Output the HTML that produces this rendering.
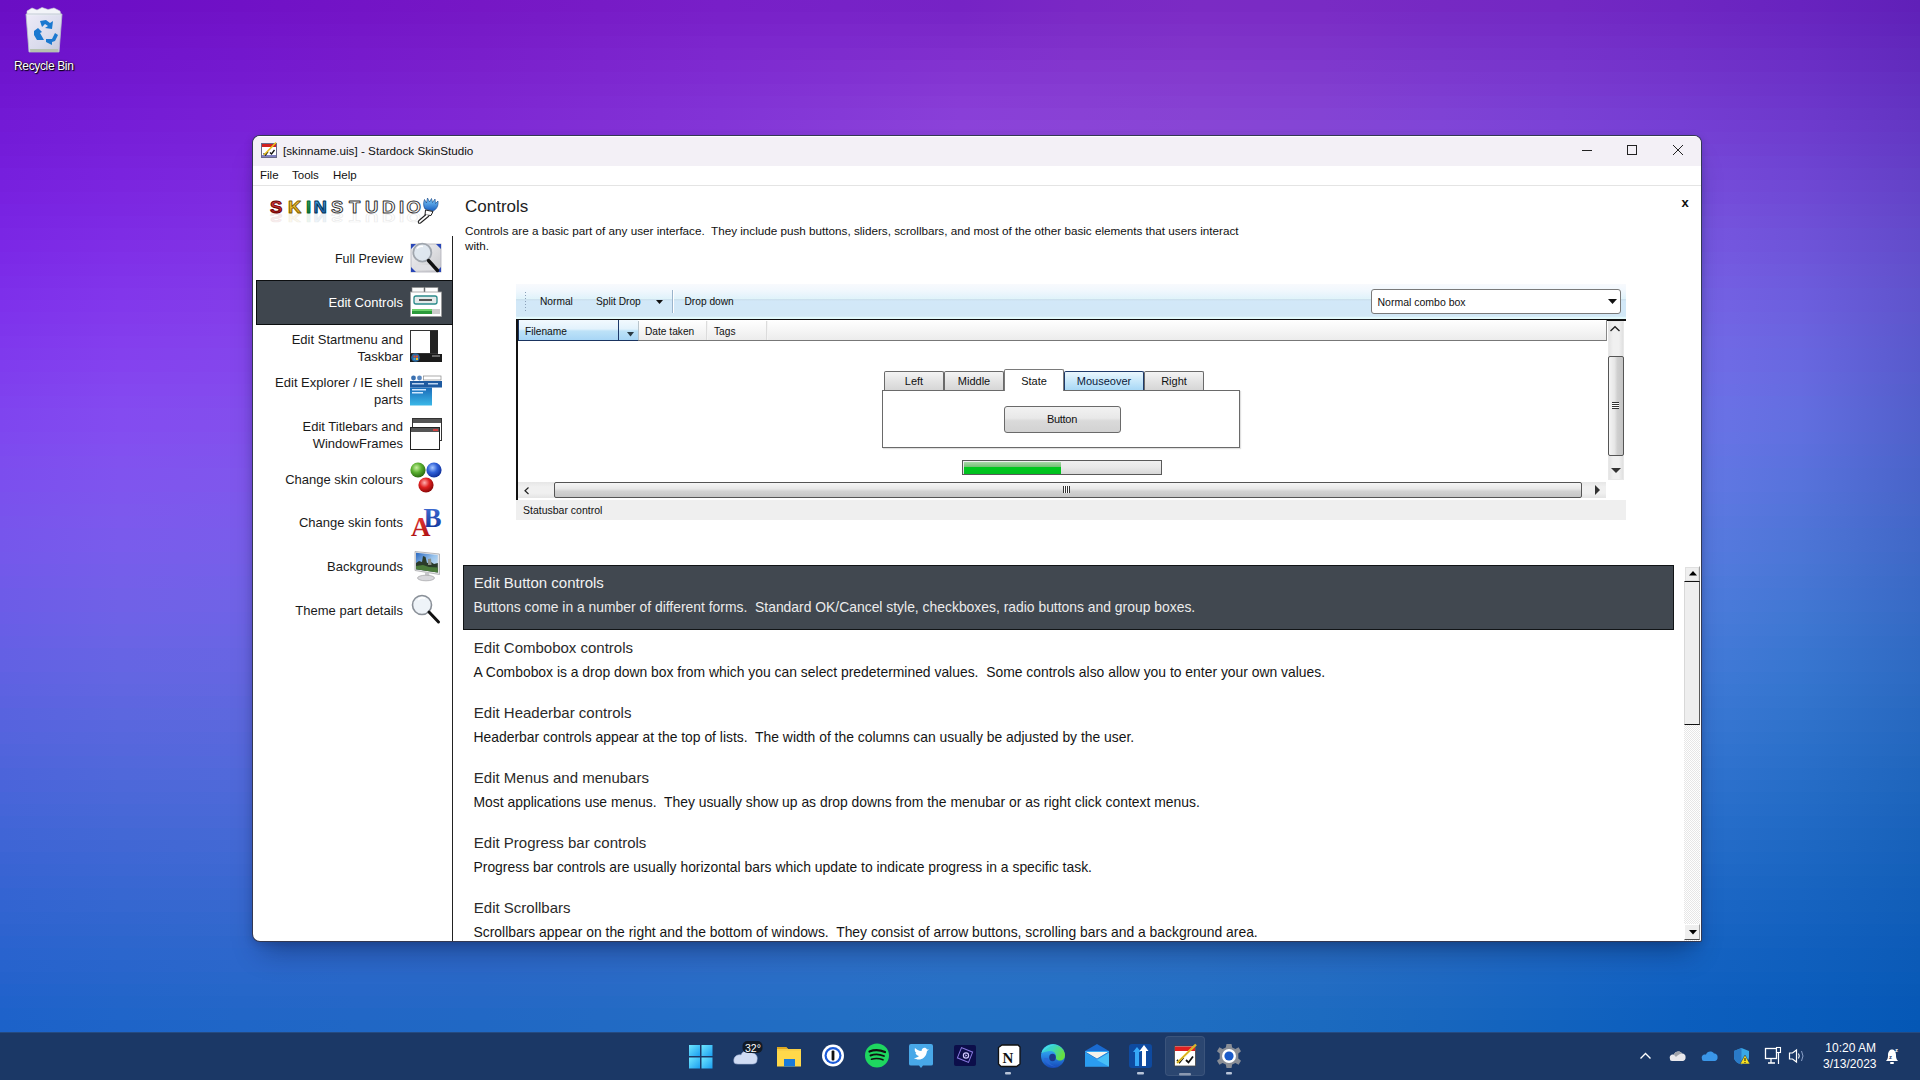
<!DOCTYPE html>
<html><head><meta charset="utf-8">
<style>
*{box-sizing:border-box;margin:0;padding:0}
html,body{width:1920px;height:1080px;overflow:hidden;position:relative;font-family:"Liberation Sans",sans-serif;color:#1a1a1a}
#bg i{position:absolute;left:0;width:1920px;height:12px;display:block}
.a{position:absolute;white-space:nowrap;line-height:1}
.r{text-align:right}
svg{position:absolute;overflow:visible}
</style></head><body>
<div id="bg" style="position:absolute;left:0;top:0;width:1920px;height:1032px;overflow:hidden">
<i style="top:0px;background:linear-gradient(90deg,#6a0ec4 0.00%,#6d0fc6 6.25%,#7011c6 12.50%,#7314c6 18.75%,#7617c5 25.00%,#771bc6 31.25%,#781fc8 37.50%,#7722c7 43.75%,#7623c5 50.00%,#7a28c5 56.25%,#7b2bc4 62.50%,#792bc4 68.75%,#7629c3 75.00%,#7328c3 81.25%,#6e26c2 87.50%,#6823bf 93.75%,#6020b8 100.00%)"></i>
<i style="top:12px;background:linear-gradient(90deg,#6b0fc6 0.00%,#6e11c7 6.25%,#7113c8 12.50%,#7415c7 18.75%,#7619c6 25.00%,#781dc8 31.25%,#7921c9 37.50%,#7924c9 43.75%,#7826c7 50.00%,#7c2bc6 56.25%,#7d2dc6 62.50%,#7b2dc6 68.75%,#762cc5 75.00%,#732bc5 81.25%,#6f28c4 87.50%,#6926c0 93.75%,#6022b9 100.00%)"></i>
<i style="top:24px;background:linear-gradient(90deg,#6c10c8 0.00%,#6f12c9 6.25%,#7214ca 12.50%,#7517c9 18.75%,#771bc8 25.00%,#791fc9 31.25%,#7a23cb 37.50%,#7b27cb 43.75%,#7b29c9 50.00%,#7d2ec8 56.25%,#7e30c8 62.50%,#7c30c7 68.75%,#772ec7 75.00%,#742dc7 81.25%,#702bc5 87.50%,#6928c2 93.75%,#6024ba 100.00%)"></i>
<i style="top:36px;background:linear-gradient(90deg,#6d12c9 0.00%,#7013cb 6.25%,#7316cb 12.50%,#7619ca 18.75%,#781cc9 25.00%,#7a21cb 31.25%,#7c26cd 37.50%,#7c29cd 43.75%,#7d2ccb 50.00%,#7f30ca 56.25%,#8033c9 62.50%,#7d33c9 68.75%,#7831c9 75.00%,#7530c9 81.25%,#712dc7 87.50%,#6a2ac3 93.75%,#6127bb 100.00%)"></i>
<i style="top:48px;background:linear-gradient(90deg,#6d13cb 0.00%,#7115cd 6.25%,#7317cd 12.50%,#771acc 18.75%,#791ecb 25.00%,#7b23cd 31.25%,#7d28ce 37.50%,#7e2cce 43.75%,#802fce 50.00%,#8133cc 56.25%,#8135cb 62.50%,#7e35cb 68.75%,#7934cb 75.00%,#7632cb 81.25%,#7130c9 87.50%,#6b2dc5 93.75%,#6129bc 100.00%)"></i>
<i style="top:60px;background:linear-gradient(90deg,#6e14cd 0.00%,#7116ce 6.25%,#7419cf 12.50%,#771ccd 18.75%,#7a20cc 25.00%,#7c25ce 31.25%,#7e2ad0 37.50%,#802fd0 43.75%,#8233d0 50.00%,#8336ce 56.25%,#8338cd 62.50%,#7f38cd 68.75%,#7a37cc 75.00%,#7735cc 81.25%,#7232ca 87.50%,#6b2fc6 93.75%,#612bbd 100.00%)"></i>
<i style="top:72px;background:linear-gradient(90deg,#6f15cf 0.00%,#7218d0 6.25%,#751ad0 12.50%,#781ecf 18.75%,#7b22ce 25.00%,#7d27d0 31.25%,#7f2cd2 37.50%,#8131d2 43.75%,#8436d2 50.00%,#8439d0 56.25%,#843bce 62.50%,#803bce 68.75%,#7c39cf 75.00%,#7838ce 81.25%,#7335cc 87.50%,#6c32c8 93.75%,#622ebf 100.00%)"></i>
<i style="top:84px;background:linear-gradient(90deg,#7016d1 0.00%,#7319d2 6.25%,#761cd2 12.50%,#7920d1 18.75%,#7c24d0 25.00%,#7e29d1 31.25%,#802fd3 37.50%,#8334d4 43.75%,#8639d4 50.00%,#863cd2 56.25%,#853dd0 62.50%,#823ed0 68.75%,#7d3cd1 75.00%,#793ad0 81.25%,#7437ce 87.50%,#6c34c9 93.75%,#6230c0 100.00%)"></i>
<i style="top:96px;background:linear-gradient(90deg,#7117d2 0.00%,#741ad4 6.25%,#771ed4 12.50%,#7a21d2 18.75%,#7d25d1 25.00%,#7f2bd3 31.25%,#8131d5 37.50%,#8437d5 43.75%,#883cd6 50.00%,#873ed3 56.25%,#8640d2 62.50%,#8340d2 68.75%,#7e3fd3 75.00%,#793dd2 81.25%,#743ad0 87.50%,#6d36cb 93.75%,#6232c1 100.00%)"></i>
<i style="top:108px;background:linear-gradient(90deg,#7219d4 0.00%,#751cd5 6.25%,#781fd5 12.50%,#7b23d4 18.75%,#7e27d3 25.00%,#802dd4 31.25%,#8233d6 37.50%,#8539d7 43.75%,#893fd8 50.00%,#8941d5 56.25%,#8743d3 62.50%,#8443d4 68.75%,#7f42d5 75.00%,#7a40d4 81.25%,#753cd2 87.50%,#6d39cc 93.75%,#6334c2 100.00%)"></i>
<i style="top:120px;background:linear-gradient(90deg,#731ad6 0.00%,#761dd7 6.25%,#7921d7 12.50%,#7c25d5 18.75%,#7e29d5 25.00%,#812fd5 31.25%,#8335d7 37.50%,#873cd8 43.75%,#8b42d9 50.00%,#8a44d7 56.25%,#8845d5 62.50%,#8445d5 68.75%,#8045d7 75.00%,#7b42d6 81.25%,#753fd4 87.50%,#6e3bce 93.75%,#6337c3 100.00%)"></i>
<i style="top:132px;background:linear-gradient(90deg,#731bd8 0.00%,#771fd9 6.25%,#7923d8 12.50%,#7c27d7 18.75%,#7f2bd6 25.00%,#8131d7 31.25%,#8437d9 37.50%,#883eda 43.75%,#8c44db 50.00%,#8b46d8 56.25%,#8948d6 62.50%,#8548d7 68.75%,#8148d8 75.00%,#7c45d7 81.25%,#7641d5 87.50%,#6e3ecf 93.75%,#6339c4 100.00%)"></i>
<i style="top:144px;background:linear-gradient(90deg,#741cd9 0.00%,#7820da 6.25%,#7a24da 12.50%,#7d28d8 18.75%,#802dd8 25.00%,#8233d8 31.25%,#8539da 37.50%,#8940db 43.75%,#8d47dc 50.00%,#8c49da 56.25%,#8a4ad8 62.50%,#864bd8 68.75%,#824ada 75.00%,#7c48d9 81.25%,#7644d7 87.50%,#6e40d0 93.75%,#633bc5 100.00%)"></i>
<i style="top:156px;background:linear-gradient(90deg,#751ddb 0.00%,#7922dc 6.25%,#7b26db 12.50%,#7e2ada 18.75%,#802fd9 25.00%,#8335d9 31.25%,#863bdb 37.50%,#8a43dd 43.75%,#8e49dd 50.00%,#8d4bdb 56.25%,#8b4dd9 62.50%,#874dda 68.75%,#824ddb 75.00%,#7d4adb 81.25%,#7747d9 87.50%,#6e43d2 93.75%,#633dc5 100.00%)"></i>
<i style="top:168px;background:linear-gradient(90deg,#761fdd 0.00%,#7a23de 6.25%,#7c28dd 12.50%,#7e2cdb 18.75%,#8131da 25.00%,#8337db 31.25%,#863edc 37.50%,#8a45de 43.75%,#8e4bde 50.00%,#8e4edc 56.25%,#8b4fdb 62.50%,#874fdb 68.75%,#834fdd 75.00%,#7d4ddc 81.25%,#7749da 87.50%,#6f45d3 93.75%,#6340c6 100.00%)"></i>
<i style="top:180px;background:linear-gradient(90deg,#7720de 0.00%,#7b25df 6.25%,#7d2ade 12.50%,#7f2edc 18.75%,#8232db 25.00%,#8439dc 31.25%,#8740dd 37.50%,#8b47df 43.75%,#8f4de0 50.00%,#8e50de 56.25%,#8c51dc 62.50%,#8852dd 68.75%,#8352de 75.00%,#7d4fde 81.25%,#774cdb 87.50%,#6f48d4 93.75%,#6342c7 100.00%)"></i>
<i style="top:192px;background:linear-gradient(90deg,#7821e0 0.00%,#7c27e1 6.25%,#7e2ce0 12.50%,#8030de 18.75%,#8234dd 25.00%,#843add 31.25%,#8841de 37.50%,#8c49e0 43.75%,#8f4fe1 50.00%,#8f52df 56.25%,#8c53dd 62.50%,#8854de 68.75%,#8354e0 75.00%,#7e52df 81.25%,#774edd 87.50%,#6f4ad5 93.75%,#6344c8 100.00%)"></i>
<i style="top:204px;background:linear-gradient(90deg,#7823e2 0.00%,#7c28e2 6.25%,#7f2de1 12.50%,#8032df 18.75%,#8336de 25.00%,#853cde 31.25%,#8843df 37.50%,#8c4be1 43.75%,#9051e1 50.00%,#8f54e0 56.25%,#8c55de 62.50%,#8856df 68.75%,#8456e1 75.00%,#7e54e0 81.25%,#7851de 87.50%,#6f4dd6 93.75%,#6346c8 100.00%)"></i>
<i style="top:216px;background:linear-gradient(90deg,#7924e3 0.00%,#7d2ae4 6.25%,#7f2fe2 12.50%,#8134e0 18.75%,#8338df 25.00%,#853edf 31.25%,#8845e0 37.50%,#8c4de2 43.75%,#9053e2 50.00%,#8f56e1 56.25%,#8d57e0 62.50%,#8858e0 68.75%,#8458e2 75.00%,#7e57e2 81.25%,#7854df 87.50%,#6f4fd7 93.75%,#6348c9 100.00%)"></i>
<i style="top:228px;background:linear-gradient(90deg,#7a26e4 0.00%,#7e2ce5 6.25%,#8031e3 12.50%,#8135e1 18.75%,#833ae0 25.00%,#8640e0 31.25%,#8947e1 37.50%,#8d4fe3 43.75%,#9055e3 50.00%,#8f58e2 56.25%,#8d59e1 62.50%,#895ae1 68.75%,#845ae3 75.00%,#7e59e3 81.25%,#7856e1 87.50%,#6f52d8 93.75%,#624aca 100.00%)"></i>
<i style="top:240px;background:linear-gradient(90deg,#7b27e6 0.00%,#7f2ee6 6.25%,#8133e4 12.50%,#8237e2 18.75%,#843ce1 25.00%,#8642e1 31.25%,#8949e2 37.50%,#8d50e3 43.75%,#9057e4 50.00%,#8f5ae3 56.25%,#8d5be2 62.50%,#895ce3 68.75%,#845de4 75.00%,#7e5be4 81.25%,#7758e2 87.50%,#6e54d9 93.75%,#624cca 100.00%)"></i>
<i style="top:252px;background:linear-gradient(90deg,#7b29e7 0.00%,#8030e8 6.25%,#8135e6 12.50%,#8239e3 18.75%,#843ee2 25.00%,#8644e2 31.25%,#894be3 37.50%,#8d52e4 43.75%,#9058e5 50.00%,#8f5ce3 56.25%,#8d5de3 62.50%,#885ee3 68.75%,#835fe5 75.00%,#7e5de5 81.25%,#775be3 87.50%,#6e56da 93.75%,#614ecb 100.00%)"></i>
<i style="top:264px;background:linear-gradient(90deg,#7c2be8 0.00%,#8032e9 6.25%,#8237e7 12.50%,#833be4 18.75%,#8440e3 25.00%,#8645e2 31.25%,#894ce3 37.50%,#8d54e5 43.75%,#905ae5 50.00%,#8f5de4 56.25%,#8c5fe4 62.50%,#8860e4 68.75%,#8361e6 75.00%,#7e5fe6 81.25%,#775de4 87.50%,#6e59db 93.75%,#6150cb 100.00%)"></i>
<i style="top:276px;background:linear-gradient(90deg,#7c2de9 0.00%,#8134ea 6.25%,#8239e8 12.50%,#833de5 18.75%,#8441e3 25.00%,#8647e3 31.25%,#894ee4 37.50%,#8d55e5 43.75%,#8f5ce6 50.00%,#8f5fe5 56.25%,#8c61e4 62.50%,#8862e5 68.75%,#8362e7 75.00%,#7d62e7 81.25%,#775fe5 87.50%,#6d5bdc 93.75%,#6051cb 100.00%)"></i>
<i style="top:288px;background:linear-gradient(90deg,#7d2fea 0.00%,#8236eb 6.25%,#833be8 12.50%,#833fe6 18.75%,#8443e4 25.00%,#8649e4 31.25%,#8950e5 37.50%,#8c57e6 43.75%,#8f5de6 50.00%,#8f61e6 56.25%,#8c62e5 62.50%,#8864e6 68.75%,#8364e7 75.00%,#7d64e8 81.25%,#7662e5 87.50%,#6d5ddd 93.75%,#5f53cc 100.00%)"></i>
<i style="top:300px;background:linear-gradient(90deg,#7e31eb 0.00%,#8238ec 6.25%,#833de9 12.50%,#8341e6 18.75%,#8445e5 25.00%,#864be4 31.25%,#8951e5 37.50%,#8c58e6 43.75%,#8f5fe7 50.00%,#8e62e6 56.25%,#8b64e6 62.50%,#8765e7 68.75%,#8266e8 75.00%,#7c66e8 81.25%,#7664e6 87.50%,#6c5fde 93.75%,#5e54cc 100.00%)"></i>
<i style="top:312px;background:linear-gradient(90deg,#7e33ec 0.00%,#833aec 6.25%,#843fea 12.50%,#8442e7 18.75%,#8447e5 25.00%,#864ce5 31.25%,#8953e6 37.50%,#8c5ae7 43.75%,#8e60e7 50.00%,#8e64e7 56.25%,#8b66e6 62.50%,#8767e7 68.75%,#8268e9 75.00%,#7c67e9 81.25%,#7566e7 87.50%,#6c61de 93.75%,#5d56cc 100.00%)"></i>
<i style="top:324px;background:linear-gradient(90deg,#7e35ec 0.00%,#833ced 6.25%,#8441eb 12.50%,#8444e8 18.75%,#8448e6 25.00%,#864ee5 31.25%,#8854e6 37.50%,#8b5be7 43.75%,#8d61e8 50.00%,#8d65e7 56.25%,#8a67e7 62.50%,#8669e8 68.75%,#8169e9 75.00%,#7b69e9 81.25%,#7468e7 87.50%,#6b63df 93.75%,#5b57cc 100.00%)"></i>
<i style="top:336px;background:linear-gradient(90deg,#7f37ed 0.00%,#843eee 6.25%,#8443eb 12.50%,#8446e8 18.75%,#844ae6 25.00%,#854fe6 31.25%,#8856e6 37.50%,#8b5de7 43.75%,#8d63e8 50.00%,#8c66e7 56.25%,#8968e7 62.50%,#856ae8 68.75%,#806bea 75.00%,#7a6bea 81.25%,#746ae8 87.50%,#6a65df 93.75%,#5a58cc 100.00%)"></i>
<i style="top:348px;background:linear-gradient(90deg,#7f39ed 0.00%,#8440ee 6.25%,#8445ec 12.50%,#8348e9 18.75%,#844ce7 25.00%,#8551e6 31.25%,#8757e7 37.50%,#8a5ee8 43.75%,#8c64e8 50.00%,#8b68e8 56.25%,#896ae8 62.50%,#846be9 68.75%,#7f6cea 75.00%,#796dea 81.25%,#736be8 87.50%,#6966e0 93.75%,#5959cc 100.00%)"></i>
<i style="top:360px;background:linear-gradient(90deg,#7f3cee 0.00%,#8442ef 6.25%,#8446ec 12.50%,#834ae9 18.75%,#834de7 25.00%,#8452e7 31.25%,#8759e7 37.50%,#895fe8 43.75%,#8b65e8 50.00%,#8b69e8 56.25%,#886be8 62.50%,#846de9 68.75%,#7e6eea 75.00%,#786eeb 81.25%,#726de8 87.50%,#6868e0 93.75%,#575acc 100.00%)"></i>
<i style="top:372px;background:linear-gradient(90deg,#7f3eee 0.00%,#8445ef 6.25%,#8448ed 12.50%,#834bea 18.75%,#834fe8 25.00%,#8454e7 31.25%,#865ae7 37.50%,#8960e8 43.75%,#8a66e8 50.00%,#8a6ae8 56.25%,#876ce8 62.50%,#836ee9 68.75%,#7d6feb 75.00%,#7770eb 81.25%,#716fe9 87.50%,#676ae0 93.75%,#565ccc 100.00%)"></i>
<i style="top:384px;background:linear-gradient(90deg,#7f40ee 0.00%,#8447f0 6.25%,#844aed 12.50%,#834dea 18.75%,#8250e8 25.00%,#8355e7 31.25%,#855be7 37.50%,#8862e8 43.75%,#8967e8 50.00%,#896be8 56.25%,#866de9 62.50%,#826fe9 68.75%,#7c71eb 75.00%,#7671eb 81.25%,#6f70e9 87.50%,#666be0 93.75%,#545dcb 100.00%)"></i>
<i style="top:396px;background:linear-gradient(90deg,#7f42ef 0.00%,#8449f0 6.25%,#834ced 12.50%,#824fea 18.75%,#8252e8 25.00%,#8357e7 31.25%,#855ce7 37.50%,#8763e8 43.75%,#8868e8 50.00%,#886ce8 56.25%,#856fe9 62.50%,#8170ea 68.75%,#7b72eb 75.00%,#7572eb 81.25%,#6e72e9 87.50%,#646de0 93.75%,#535ecb 100.00%)"></i>
<i style="top:408px;background:linear-gradient(90deg,#7f44ef 0.00%,#844bf0 6.25%,#834eed 12.50%,#8250ea 18.75%,#8153e8 25.00%,#8258e7 31.25%,#845ee7 37.50%,#8664e8 43.75%,#8769e8 50.00%,#866de9 56.25%,#8470e9 62.50%,#8072ea 68.75%,#7a73eb 75.00%,#7474eb 81.25%,#6d73e8 87.50%,#636ee0 93.75%,#525fcb 100.00%)"></i>
<i style="top:420px;background:linear-gradient(90deg,#7e46ef 0.00%,#834cf0 6.25%,#834fed 12.50%,#8152ea 18.75%,#8055e8 25.00%,#8159e7 31.25%,#835fe7 37.50%,#8565e8 43.75%,#866ae8 50.00%,#856ee9 56.25%,#8371e9 62.50%,#7e73ea 68.75%,#7974eb 75.00%,#7375eb 81.25%,#6b74e8 87.50%,#616fdf 93.75%,#5060cb 100.00%)"></i>
<i style="top:432px;background:linear-gradient(90deg,#7e48ef 0.00%,#834ef0 6.25%,#8251ed 12.50%,#8053ea 18.75%,#8056e8 25.00%,#805ae7 31.25%,#8260e7 37.50%,#8466e8 43.75%,#856be8 50.00%,#846fe8 56.25%,#8171e9 62.50%,#7d73ea 68.75%,#7875eb 75.00%,#7176eb 81.25%,#6a75e8 87.50%,#5f70df 93.75%,#4f61ca 100.00%)"></i>
<i style="top:444px;background:linear-gradient(90deg,#7d4aef 0.00%,#8250f0 6.25%,#8153ed 12.50%,#8055ea 18.75%,#7f57e8 25.00%,#7f5ce7 31.25%,#8161e7 37.50%,#8367e8 43.75%,#836ce8 50.00%,#8370e8 56.25%,#8072e9 62.50%,#7c74ea 68.75%,#7676ea 75.00%,#7077ea 81.25%,#6876e7 87.50%,#5d70de 93.75%,#4d62ca 100.00%)"></i>
<i style="top:456px;background:linear-gradient(90deg,#7d4cee 0.00%,#8152ef 6.25%,#8054ed 12.50%,#7f56ea 18.75%,#7e59e8 25.00%,#7e5de7 31.25%,#8062e7 37.50%,#8168e8 43.75%,#826de8 50.00%,#8170e8 56.25%,#7f73e9 62.50%,#7a75e9 68.75%,#7577ea 75.00%,#6e78ea 81.25%,#6677e7 87.50%,#5b71dd 93.75%,#4b63ca 100.00%)"></i>
<i style="top:468px;background:linear-gradient(90deg,#7c4dee 0.00%,#8053ef 6.25%,#8056ed 12.50%,#7e57ea 18.75%,#7d5ae8 25.00%,#7d5ee7 31.25%,#7e63e7 37.50%,#8068e7 43.75%,#816de8 50.00%,#8071e8 56.25%,#7d74e8 62.50%,#7976e9 68.75%,#7378ea 75.00%,#6d79ea 81.25%,#6578e6 87.50%,#5972dc 93.75%,#4a63c9 100.00%)"></i>
<i style="top:480px;background:linear-gradient(90deg,#7b4fee 0.00%,#7f55ee 6.25%,#7f57ec 12.50%,#7d59ea 18.75%,#7c5be8 25.00%,#7c5fe7 31.25%,#7d64e7 37.50%,#7f69e7 43.75%,#7f6ee7 50.00%,#7e72e8 56.25%,#7c75e8 62.50%,#7777e9 68.75%,#7278ea 75.00%,#6b79e9 81.25%,#6379e6 87.50%,#5773db 93.75%,#4864c9 100.00%)"></i>
<i style="top:492px;background:linear-gradient(90deg,#7a51ed 0.00%,#7e56ee 6.25%,#7d59ec 12.50%,#7c5ae9 18.75%,#7b5ce8 25.00%,#7b60e7 31.25%,#7c65e6 37.50%,#7d6ae7 43.75%,#7e6fe7 50.00%,#7d72e7 56.25%,#7a75e8 62.50%,#7677e9 68.75%,#7079e9 75.00%,#697ae9 81.25%,#6179e5 87.50%,#5573da 93.75%,#4765c8 100.00%)"></i>
<i style="top:504px;background:linear-gradient(90deg,#7952ed 0.00%,#7d58ed 6.25%,#7c5aec 12.50%,#7b5be9 18.75%,#7a5de7 25.00%,#7a61e6 31.25%,#7b66e6 37.50%,#7c6be6 43.75%,#7c6fe7 50.00%,#7b73e7 56.25%,#7976e7 62.50%,#7478e8 68.75%,#6f79e9 75.00%,#677be8 81.25%,#5f7ae4 87.50%,#5374d9 93.75%,#4566c8 100.00%)"></i>
<i style="top:516px;background:linear-gradient(90deg,#7854ec 0.00%,#7c59ed 6.25%,#7b5beb 12.50%,#795ce9 18.75%,#785ee7 25.00%,#7862e6 31.25%,#7966e6 37.50%,#7a6be6 43.75%,#7b70e6 50.00%,#7a74e7 56.25%,#7776e7 62.50%,#7378e8 68.75%,#6d7ae8 75.00%,#667be7 81.25%,#5d7ae3 87.50%,#5174d8 93.75%,#4366c8 100.00%)"></i>
<i style="top:528px;background:linear-gradient(90deg,#7755ec 0.00%,#7a5aec 6.25%,#7a5ceb 12.50%,#785de8 18.75%,#775fe7 25.00%,#7763e6 31.25%,#7867e5 37.50%,#796ce6 43.75%,#7971e6 50.00%,#7874e6 56.25%,#7577e7 62.50%,#7179e7 68.75%,#6b7ae8 75.00%,#647ce7 81.25%,#5b7be2 87.50%,#4f75d7 93.75%,#4167c7 100.00%)"></i>
<i style="top:540px;background:linear-gradient(90deg,#7557eb 0.00%,#795cec 6.25%,#785eea 12.50%,#775fe8 18.75%,#7660e6 25.00%,#7663e5 31.25%,#7668e5 37.50%,#776de5 43.75%,#7771e5 50.00%,#7675e6 56.25%,#7377e6 62.50%,#6f79e7 68.75%,#697be7 75.00%,#627ce6 81.25%,#597be2 87.50%,#4d75d6 93.75%,#4068c7 100.00%)"></i>
<i style="top:552px;background:linear-gradient(90deg,#7458eb 0.00%,#775deb 6.25%,#775fe9 12.50%,#7560e7 18.75%,#7461e6 25.00%,#7464e5 31.25%,#7568e4 37.50%,#756de5 43.75%,#7672e5 50.00%,#7475e5 56.25%,#7277e6 62.50%,#6d79e6 68.75%,#677be6 75.00%,#607ce5 81.25%,#577be1 87.50%,#4b76d6 93.75%,#3e68c6 100.00%)"></i>
<i style="top:564px;background:linear-gradient(90deg,#7259ea 0.00%,#755eea 6.25%,#7560e9 12.50%,#7460e7 18.75%,#7362e5 25.00%,#7265e4 31.25%,#7369e4 37.50%,#746ee4 43.75%,#7472e4 50.00%,#7375e5 56.25%,#7078e5 62.50%,#6c7ae5 68.75%,#667be6 75.00%,#5e7ce5 81.25%,#557ce0 87.50%,#4976d5 93.75%,#3c69c6 100.00%)"></i>
<i style="top:576px;background:linear-gradient(90deg,#705ae9 0.00%,#745fe9 6.25%,#7361e8 12.50%,#7261e6 18.75%,#7163e5 25.00%,#7166e4 31.25%,#716ae3 37.50%,#726ee4 43.75%,#7272e4 50.00%,#7176e4 56.25%,#6e78e4 62.50%,#6a7ae5 68.75%,#647be5 75.00%,#5c7ce4 81.25%,#527cdf 87.50%,#4776d4 93.75%,#3a69c5 100.00%)"></i>
<i style="top:588px;background:linear-gradient(90deg,#6e5be8 0.00%,#7260e8 6.25%,#7262e7 12.50%,#7062e5 18.75%,#6f64e4 25.00%,#6f66e3 31.25%,#706ae3 37.50%,#706fe3 43.75%,#7073e3 50.00%,#6f76e3 56.25%,#6c78e4 62.50%,#687ae4 68.75%,#627ce4 75.00%,#5a7ce3 81.25%,#507cde 87.50%,#4576d4 93.75%,#3969c5 100.00%)"></i>
<i style="top:600px;background:linear-gradient(90deg,#6c5ce7 0.00%,#7061e7 6.25%,#7063e6 12.50%,#6f63e5 18.75%,#6e64e3 25.00%,#6d67e2 31.25%,#6e6be2 37.50%,#6e6fe2 43.75%,#6e73e3 50.00%,#6d76e3 56.25%,#6a78e3 62.50%,#667ae3 68.75%,#607ce3 75.00%,#587ce2 81.25%,#4e7cdd 87.50%,#4277d3 93.75%,#376ac5 100.00%)"></i>
<i style="top:612px;background:linear-gradient(90deg,#6a5de7 0.00%,#6e62e7 6.25%,#6e63e6 12.50%,#6d64e4 18.75%,#6c65e3 25.00%,#6c68e2 31.25%,#6c6be2 37.50%,#6c6fe2 43.75%,#6c73e2 50.00%,#6b76e2 56.25%,#6879e2 62.50%,#647ae3 68.75%,#5e7ce3 75.00%,#567ce1 81.25%,#4c7cdc 87.50%,#4077d2 93.75%,#356ac4 100.00%)"></i>
<i style="top:624px;background:linear-gradient(90deg,#685ee6 0.00%,#6c63e6 6.25%,#6c64e5 12.50%,#6b64e3 18.75%,#6a66e2 25.00%,#6a68e1 31.25%,#6a6ce1 37.50%,#6b70e1 43.75%,#6a74e1 50.00%,#6977e1 56.25%,#6679e2 62.50%,#627ae2 68.75%,#5c7be2 75.00%,#547ce0 81.25%,#4a7bdb 87.50%,#3e77d2 93.75%,#336ac4 100.00%)"></i>
<i style="top:636px;background:linear-gradient(90deg,#665fe5 0.00%,#6a64e5 6.25%,#6a65e4 12.50%,#6965e3 18.75%,#6866e1 25.00%,#6869e0 31.25%,#686ce0 37.50%,#6970e0 43.75%,#6874e0 50.00%,#6777e1 56.25%,#6479e1 62.50%,#607ae1 68.75%,#5a7be1 75.00%,#527cdf 81.25%,#487bdb 87.50%,#3c76d1 93.75%,#316ac3 100.00%)"></i>
<i style="top:648px;background:linear-gradient(90deg,#6460e4 0.00%,#6764e4 6.25%,#6865e3 12.50%,#6766e2 18.75%,#6667e1 25.00%,#6669e0 31.25%,#666ddf 37.50%,#6770e0 43.75%,#6674e0 50.00%,#6577e0 56.25%,#6279e0 62.50%,#5e7ae0 68.75%,#587be0 75.00%,#507cde 81.25%,#467bda 87.50%,#3a76d0 93.75%,#306ac3 100.00%)"></i>
<i style="top:660px;background:linear-gradient(90deg,#6261e3 0.00%,#6565e3 6.25%,#6666e2 12.50%,#6566e1 18.75%,#6467e0 25.00%,#646adf 31.25%,#646ddf 37.50%,#6571df 43.75%,#6474df 50.00%,#6377df 56.25%,#6079df 62.50%,#5c7adf 68.75%,#567bdf 75.00%,#4d7bdd 81.25%,#447ad9 87.50%,#3876d0 93.75%,#2e6ac2 100.00%)"></i>
<i style="top:672px;background:linear-gradient(90deg,#5f61e2 0.00%,#6366e2 6.25%,#6466e1 12.50%,#6367e0 18.75%,#6368df 25.00%,#626ade 31.25%,#626dde 37.50%,#6271de 43.75%,#6274de 50.00%,#6177de 56.25%,#5e79de 62.50%,#5a7ade 68.75%,#537ade 75.00%,#4b7bdc 81.25%,#417ad8 87.50%,#3675cf 93.75%,#2c6ac2 100.00%)"></i>
<i style="top:684px;background:linear-gradient(90deg,#5d62e1 0.00%,#6166e1 6.25%,#6267e0 12.50%,#6167df 18.75%,#6068de 25.00%,#606add 31.25%,#606ddd 37.50%,#6071dd 43.75%,#6074dd 50.00%,#5f77dd 56.25%,#5c79dd 62.50%,#587add 68.75%,#517add 75.00%,#497adb 81.25%,#3f79d7 87.50%,#3475ce 93.75%,#2b69c1 100.00%)"></i>
<i style="top:696px;background:linear-gradient(90deg,#5b62e0 0.00%,#5e66e0 6.25%,#5f67df 12.50%,#5f68de 18.75%,#5e68dd 25.00%,#5e6bdd 31.25%,#5e6edc 37.50%,#5e71dc 43.75%,#5e74dc 50.00%,#5d77dc 56.25%,#5a78dc 62.50%,#5579dc 68.75%,#4f7adc 75.00%,#477ada 81.25%,#3d78d6 87.50%,#3374cd 93.75%,#2969c0 100.00%)"></i>
<i style="top:708px;background:linear-gradient(90deg,#5863df 0.00%,#5c67df 6.25%,#5d68de 12.50%,#5d68dd 18.75%,#5c69dc 25.00%,#5c6bdc 31.25%,#5c6edc 37.50%,#5c71db 43.75%,#5c74dc 50.00%,#5a77db 56.25%,#5878db 62.50%,#5379db 68.75%,#4d79db 75.00%,#4579d9 81.25%,#3b78d5 87.50%,#3173cc 93.75%,#2768c0 100.00%)"></i>
<i style="top:720px;background:linear-gradient(90deg,#5663de 0.00%,#5967de 6.25%,#5b68dd 12.50%,#5b68dc 18.75%,#5a69db 25.00%,#5a6bdb 31.25%,#5a6edb 37.50%,#5a71db 43.75%,#5975db 50.00%,#5877db 56.25%,#5578da 62.50%,#5179da 68.75%,#4b79da 75.00%,#4378d8 81.25%,#3977d4 87.50%,#2f72cb 93.75%,#2668bf 100.00%)"></i>
<i style="top:732px;background:linear-gradient(90deg,#5464dd 0.00%,#5767dd 6.25%,#5868dc 12.50%,#5868dc 18.75%,#5869db 25.00%,#586bda 31.25%,#586eda 37.50%,#5872da 43.75%,#5775da 50.00%,#5677da 56.25%,#5378d9 62.50%,#4f78d9 68.75%,#4978d8 75.00%,#4178d7 81.25%,#3776d3 87.50%,#2d71ca 93.75%,#2467bf 100.00%)"></i>
<i style="top:744px;background:linear-gradient(90deg,#5164dc 0.00%,#5567dc 6.25%,#5668dc 12.50%,#5669db 18.75%,#5669da 25.00%,#566bd9 31.25%,#566ed9 37.50%,#5672d9 43.75%,#5574d9 50.00%,#5476d9 56.25%,#5178d8 62.50%,#4d78d8 68.75%,#4778d7 75.00%,#3f77d6 81.25%,#3575d2 87.50%,#2b70ca 93.75%,#2367be 100.00%)"></i>
<i style="top:756px;background:linear-gradient(90deg,#4f64db 0.00%,#5268db 6.25%,#5469db 12.50%,#5469da 18.75%,#546ad9 25.00%,#536cd8 31.25%,#536ed8 37.50%,#5372d8 43.75%,#5374d8 50.00%,#5176d8 56.25%,#4f77d7 62.50%,#4b77d7 68.75%,#4577d6 75.00%,#3d76d5 81.25%,#3374d1 87.50%,#2a6fc9 93.75%,#2166bd 100.00%)"></i>
<i style="top:768px;background:linear-gradient(90deg,#4c64da 0.00%,#5068da 6.25%,#5169da 12.50%,#5269d9 18.75%,#516ad8 25.00%,#516cd7 31.25%,#516fd7 37.50%,#5172d7 43.75%,#5174d7 50.00%,#4f76d7 56.25%,#4d77d6 62.50%,#4877d6 68.75%,#4276d5 75.00%,#3a75d4 81.25%,#3173d0 87.50%,#286ec8 93.75%,#1f65bd 100.00%)"></i>
<i style="top:780px;background:linear-gradient(90deg,#4a64da 0.00%,#4d68d9 6.25%,#4f69d9 12.50%,#4f69d8 18.75%,#4f6ad7 25.00%,#4f6cd6 31.25%,#4f6fd6 37.50%,#4f72d6 43.75%,#4e74d6 50.00%,#4d76d6 56.25%,#4a77d5 62.50%,#4676d5 68.75%,#4076d4 75.00%,#3874d3 81.25%,#2f72cf 87.50%,#266dc7 93.75%,#1e65bc 100.00%)"></i>
<i style="top:792px;background:linear-gradient(90deg,#4765d9 0.00%,#4b68d8 6.25%,#4c69d8 12.50%,#4d69d7 18.75%,#4d6ad6 25.00%,#4d6cd5 31.25%,#4d6fd5 37.50%,#4d72d5 43.75%,#4c74d5 50.00%,#4b76d5 56.25%,#4876d4 62.50%,#4476d4 68.75%,#3e75d3 75.00%,#3673d1 81.25%,#2d71ce 87.50%,#246cc6 93.75%,#1c64bc 100.00%)"></i>
<i style="top:804px;background:linear-gradient(90deg,#4565d8 0.00%,#4868d7 6.25%,#4a69d7 12.50%,#4a69d6 18.75%,#4a6ad5 25.00%,#4a6cd4 31.25%,#4a6fd4 37.50%,#4a72d4 43.75%,#4a74d4 50.00%,#4875d4 56.25%,#4676d3 62.50%,#4275d2 68.75%,#3c74d2 75.00%,#3473d0 81.25%,#2b70cd 87.50%,#236bc6 93.75%,#1b63bb 100.00%)"></i>
<i style="top:816px;background:linear-gradient(90deg,#4265d7 0.00%,#4668d6 6.25%,#4869d6 12.50%,#4869d5 18.75%,#486ad4 25.00%,#486cd3 31.25%,#486fd3 37.50%,#4872d3 43.75%,#4774d3 50.00%,#4675d3 56.25%,#4475d2 62.50%,#4075d1 68.75%,#3a73d0 75.00%,#3272cf 81.25%,#296fcc 87.50%,#216ac5 93.75%,#1a62bb 100.00%)"></i>
<i style="top:828px;background:linear-gradient(90deg,#4065d6 0.00%,#4368d5 6.25%,#4569d5 12.50%,#4669d4 18.75%,#466ad3 25.00%,#466cd3 31.25%,#466fd2 37.50%,#4671d2 43.75%,#4574d2 50.00%,#4475d2 56.25%,#4175d1 62.50%,#3e74d0 68.75%,#3873cf 75.00%,#3071ce 81.25%,#286ecb 87.50%,#2069c4 93.75%,#1862ba 100.00%)"></i>
<i style="top:840px;background:linear-gradient(90deg,#3e65d5 0.00%,#4167d4 6.25%,#4369d4 12.50%,#4369d3 18.75%,#436ad2 25.00%,#436cd2 31.25%,#446fd1 37.50%,#4371d1 43.75%,#4374d1 50.00%,#4175d1 56.25%,#3f75d0 62.50%,#3b74cf 68.75%,#3672ce 75.00%,#2e70cd 81.25%,#266dca 87.50%,#1e68c3 93.75%,#1761ba 100.00%)"></i>
<i style="top:852px;background:linear-gradient(90deg,#3b64d4 0.00%,#3e67d4 6.25%,#4069d3 12.50%,#4169d2 18.75%,#416ad1 25.00%,#416cd1 31.25%,#416ed0 37.50%,#4171d0 43.75%,#4073d0 50.00%,#3f74d0 56.25%,#3d74cf 62.50%,#3973ce 68.75%,#3371cd 75.00%,#2c6fcc 81.25%,#246cc9 87.50%,#1c67c3 93.75%,#1660ba 100.00%)"></i>
<i style="top:864px;background:linear-gradient(90deg,#3964d3 0.00%,#3c67d3 6.25%,#3e68d2 12.50%,#3e69d1 18.75%,#3f6ad0 25.00%,#3f6cd0 31.25%,#3f6ed0 37.50%,#3f71cf 43.75%,#3e73cf 50.00%,#3d74cf 56.25%,#3b74ce 62.50%,#3772cd 68.75%,#3170cc 75.00%,#2a6ecb 81.25%,#226ac8 87.50%,#1b66c2 93.75%,#1460b9 100.00%)"></i>
<i style="top:876px;background:linear-gradient(90deg,#3764d3 0.00%,#3967d2 6.25%,#3b68d1 12.50%,#3c69d0 18.75%,#3c6acf 25.00%,#3c6ccf 31.25%,#3d6ecf 37.50%,#3c71ce 43.75%,#3c73ce 50.00%,#3b74ce 56.25%,#3873cd 62.50%,#3572cc 68.75%,#2f6fcb 75.00%,#286dca 81.25%,#2069c7 87.50%,#1965c1 93.75%,#135fb9 100.00%)"></i>
<i style="top:888px;background:linear-gradient(90deg,#3464d2 0.00%,#3767d1 6.25%,#3968d0 12.50%,#3a69cf 18.75%,#3a69ce 25.00%,#3a6bce 31.25%,#3a6ece 37.50%,#3a71cd 43.75%,#3973cd 50.00%,#3873cc 56.25%,#3673cc 62.50%,#3371ca 68.75%,#2d6fc9 75.00%,#266cc9 81.25%,#1e68c6 87.50%,#1864c1 93.75%,#125eb9 100.00%)"></i>
<i style="top:900px;background:linear-gradient(90deg,#3264d1 0.00%,#3567d0 6.25%,#3768cf 12.50%,#3768ce 18.75%,#3769cd 25.00%,#386bcd 31.25%,#386ecd 37.50%,#3871cc 43.75%,#3772cc 50.00%,#3673cb 56.25%,#3472cb 62.50%,#3070c9 68.75%,#2b6ec8 75.00%,#246bc8 81.25%,#1c67c6 87.50%,#1663c0 93.75%,#115eb8 100.00%)"></i>
<i style="top:912px;background:linear-gradient(90deg,#3064d0 0.00%,#3266cf 6.25%,#3468ce 12.50%,#3568cd 18.75%,#3569cc 25.00%,#356bcc 31.25%,#366ecc 37.50%,#3570cb 43.75%,#3572cb 50.00%,#3473ca 56.25%,#3272ca 62.50%,#2e70c8 68.75%,#296dc7 75.00%,#226ac7 81.25%,#1b66c5 87.50%,#1562c0 93.75%,#105db8 100.00%)"></i>
<i style="top:924px;background:linear-gradient(90deg,#2e63cf 0.00%,#3066ce 6.25%,#3268cd 12.50%,#3368cc 18.75%,#3369cb 25.00%,#336bcb 31.25%,#336ecb 37.50%,#3370ca 43.75%,#3272ca 50.00%,#3172c9 56.25%,#3071c8 62.50%,#2c6fc7 68.75%,#276cc6 75.00%,#2069c6 81.25%,#1965c4 87.50%,#1361bf 93.75%,#0e5cb8 100.00%)"></i>
<i style="top:936px;background:linear-gradient(90deg,#2b63cf 0.00%,#2d66cd 6.25%,#2f67cc 12.50%,#3068cb 18.75%,#3069ca 25.00%,#316bca 31.25%,#316eca 37.50%,#3170ca 43.75%,#3072c9 50.00%,#2f72c8 56.25%,#2d71c7 62.50%,#2a6ec6 68.75%,#256bc5 75.00%,#1e68c5 81.25%,#1764c3 87.50%,#1260be 93.75%,#0d5bb8 100.00%)"></i>
<i style="top:948px;background:linear-gradient(90deg,#2963ce 0.00%,#2b66cd 6.25%,#2d67cc 12.50%,#2e68ca 18.75%,#2e69c9 25.00%,#2f6bc9 31.25%,#2f6dc9 37.50%,#2e70c9 43.75%,#2e71c8 50.00%,#2d71c7 56.25%,#2b70c6 62.50%,#286ec5 68.75%,#236bc4 75.00%,#1c67c4 81.25%,#1563c2 87.50%,#105fbe 93.75%,#0c5bb7 100.00%)"></i>
<i style="top:960px;background:linear-gradient(90deg,#2763cd 0.00%,#2965cc 6.25%,#2b67cb 12.50%,#2b68c9 18.75%,#2c68c8 25.00%,#2c6bc8 31.25%,#2d6dc8 37.50%,#2c70c8 43.75%,#2b71c7 50.00%,#2b71c6 56.25%,#2970c5 62.50%,#266dc4 68.75%,#216ac3 75.00%,#1a66c3 81.25%,#1462c2 87.50%,#0f5fbd 93.75%,#0b5ab7 100.00%)"></i>
<i style="top:972px;background:linear-gradient(90deg,#2562cc 0.00%,#2765cb 6.25%,#2867ca 12.50%,#2968c9 18.75%,#2968c7 25.00%,#2a6ac7 31.25%,#2a6dc7 37.50%,#2a6fc7 43.75%,#2971c6 50.00%,#2871c5 56.25%,#276fc4 62.50%,#246dc3 68.75%,#1f69c2 75.00%,#1865c2 81.25%,#1261c1 87.50%,#0d5ebd 93.75%,#095ab7 100.00%)"></i>
<i style="top:984px;background:linear-gradient(90deg,#2262cc 0.00%,#2465ca 6.25%,#2667c9 12.50%,#2767c8 18.75%,#2768c6 25.00%,#286ac6 31.25%,#286dc6 37.50%,#286fc6 43.75%,#2770c5 50.00%,#2670c5 56.25%,#256fc3 62.50%,#226cc2 68.75%,#1d68c1 75.00%,#1664c1 81.25%,#1060c0 87.50%,#0c5dbc 93.75%,#0859b6 100.00%)"></i>
<i style="top:996px;background:linear-gradient(90deg,#2062cb 0.00%,#2265c9 6.25%,#2466c8 12.50%,#2567c7 18.75%,#2568c6 25.00%,#256ac5 31.25%,#266dc5 37.50%,#256fc5 43.75%,#2570c4 50.00%,#2470c4 56.25%,#226ec2 62.50%,#1f6bc1 68.75%,#1b68c0 75.00%,#1564c0 81.25%,#0e5fbf 87.50%,#0b5cbc 93.75%,#0758b6 100.00%)"></i>
<i style="top:1008px;background:linear-gradient(90deg,#1e62ca 0.00%,#2065c9 6.25%,#2266c7 12.50%,#2267c6 18.75%,#2268c5 25.00%,#236ac4 31.25%,#236cc4 37.50%,#236fc4 43.75%,#2270c3 50.00%,#226fc3 56.25%,#206ec1 62.50%,#1d6bc0 68.75%,#1967bf 75.00%,#1363bf 81.25%,#0d5fbe 87.50%,#095cbb 93.75%,#0658b6 100.00%)"></i>
<i style="top:1020px;background:linear-gradient(90deg,#1c62c9 0.00%,#1e64c8 6.25%,#1f66c7 12.50%,#2067c5 18.75%,#2068c4 25.00%,#216ac4 31.25%,#216cc3 37.50%,#216ec3 43.75%,#206fc2 50.00%,#206fc2 56.25%,#1e6dc1 62.50%,#1b6abf 68.75%,#1766be 75.00%,#1162be 81.25%,#0b5ebe 87.50%,#085bba 93.75%,#0457b5 100.00%)"></i>
</div>

<!-- WINDOW -->
<div id="win" style="position:absolute;left:252px;top:135px;width:1450px;height:807px;border-radius:8px 8px 2px 8px;background:#fff;border:1px solid rgba(0,8,40,.8);box-shadow:0 18px 26px -10px rgba(0,20,60,.42),0 2px 8px rgba(0,10,40,.16);overflow:hidden">
  <div style="position:absolute;left:0;top:0;width:1448px;height:1px;background:#fff"></div>
  <div style="position:absolute;left:0;top:1px;width:1448px;height:29px;background:#f3f0f6"></div>
  <div style="position:absolute;left:0;top:49px;width:1448px;height:1px;background:#e4e4e4"></div>
</div>

<!-- CONTENT (page coords) -->
<div id="content">
<!--TITLEBAR-->
<svg style="left:261px;top:142px" width="16" height="16" viewBox="0 0 16 16">
 <rect x="0.5" y="1.5" width="15" height="14" fill="#fff" stroke="#6a6a8a"/>
 <rect x="1" y="2" width="14" height="3" fill="#d02020"/>
 <rect x="1" y="13" width="14" height="2" fill="#8080c0"/>
 <path d="M2.5 11.5 l2 1.5 l2.5-3.5" stroke="#111" stroke-width="1.3" fill="none"/>
 <path d="M9 10.5 l1.5 1.5 l3-4" stroke="#111" stroke-width="1.3" fill="none"/>
 <path d="M3 13 L15 0.5" stroke="#e8c020" stroke-width="1.6"/>
</svg>
<div class="a" style="left:283px;top:145.2px;font-size:11.7px;color:#111">[skinname.uis] - Stardock SkinStudio</div>
<div style="position:absolute;left:1582px;top:150px;width:10px;height:1px;background:#222"></div>
<div style="position:absolute;left:1627px;top:145px;width:10px;height:10px;border:1px solid #222"></div>
<svg style="left:1673px;top:145px" width="10" height="10" viewBox="0 0 10 10"><path d="M0 0L10 10M10 0L0 10" stroke="#222" stroke-width="1"/></svg>
<!--MENU-->
<div class="a" style="left:260px;top:170.3px;font-size:11.5px;color:#111">File</div>
<div class="a" style="left:292px;top:170.3px;font-size:11.5px;color:#111">Tools</div>
<div class="a" style="left:333px;top:170.3px;font-size:11.5px;color:#111">Help</div>

<!--LEFT NAV-->
<div style="position:absolute;left:452px;top:236px;width:1px;height:705px;background:#222"></div>
<div style="position:absolute;left:256px;top:280px;width:197px;height:45px;background:#3f464e;border:1px solid #0c0e10;border-bottom-width:1.5px"></div>
<div class="a" style="right:1517px;top:253px;font-size:12.5px">Full Preview</div>
<div class="a" style="right:1517px;top:296px;font-size:13px;color:#fff">Edit Controls</div>
<div class="a r" style="right:1517px;top:330.5px;font-size:13px;line-height:17px">Edit Startmenu and<br>Taskbar</div>
<div class="a r" style="right:1517px;top:375px;font-size:13px;line-height:16.5px">Edit Explorer / IE shell<br>parts</div>
<div class="a r" style="right:1517px;top:418px;font-size:13px;line-height:17px">Edit Titlebars and<br>WindowFrames</div>
<div class="a" style="right:1517px;top:472.5px;font-size:13px">Change skin colours</div>
<div class="a" style="right:1517px;top:516px;font-size:13px">Change skin fonts</div>
<div class="a" style="right:1517px;top:560px;font-size:13px">Backgrounds</div>
<div class="a" style="right:1517px;top:604px;font-size:13px">Theme part details</div>

<!-- nav icons -->
<svg style="left:410px;top:243px" width="32" height="30" viewBox="0 0 32 30">
 <defs><linearGradient id="fpg" x1="0" y1="0" x2="1" y2="1"><stop offset="0" stop-color="#f4f4f6"/><stop offset="1" stop-color="#c8c8cc"/></linearGradient></defs>
 <rect x="1" y="1" width="30" height="28" fill="url(#fpg)" stroke="#b0b0b8" stroke-width=".8"/>
 <path d="M1 1h5l-5 5zM31 1h-5l5 5zM1 29h5l-5-5zM31 29h-5l5-5z" fill="#2846b8"/>
 <path d="M6 22h20v5H6z" fill="#e0e0e4"/>
 <circle cx="12.3" cy="9.6" r="9" fill="#dde6f0" fill-opacity=".85" stroke="#a0a6ae" stroke-width="1.8"/>
 <path d="M7 5.5 A6 6 0 0 1 13 3.5" stroke="#fff" stroke-width="1.4" fill="none"/>
 <path d="M18.5 17.5L27.5 27.5" stroke="#111" stroke-width="3.4" stroke-linecap="round"/>
</svg>
<svg style="left:410px;top:287px" width="32" height="30" viewBox="0 0 32 30">
 <rect x="2" y="0.5" width="12" height="5" fill="#fafafa" stroke="#888" stroke-width=".6"/>
 <rect x="15" y="0.5" width="13" height="5" fill="#fff" stroke="#888" stroke-width=".6"/>
 <rect x="0.5" y="5" width="31" height="24.5" fill="#fff" stroke="#999" stroke-width=".8"/>
 <rect x="4" y="9" width="23" height="8" rx="2" fill="#e4eaea" stroke="#2a8a8a" stroke-width="1.3"/>
 <rect x="9" y="12" width="13" height="2" fill="#555"/>
 <rect x="2" y="22" width="28" height="5" fill="#ccc"/>
 <rect x="2" y="22" width="20" height="5" fill="#2a9a3a"/>
 <rect x="2" y="22" width="20" height="2" fill="#6bd06b"/>
</svg>
<svg style="left:410px;top:330px" width="32" height="32" viewBox="0 0 32 32">
 <rect x="0.5" y="0.5" width="27" height="23" fill="#fff" stroke="#333"/>
 <rect x="20" y="1" width="8" height="22" fill="#222"/>
 <rect x="0" y="24" width="32" height="8" fill="#1a1a1a"/>
 <rect x="22" y="25" width="8" height="2" fill="#666"/>
 <circle cx="5.5" cy="27.5" r="4.3" fill="#2a6aa0"/><path d="M3.5 25.5h2v2h-2zM6 25.5h2v2H6z" fill="#e05030"/><path d="M3.5 28h2v2h-2z" fill="#3aa0e0"/><path d="M6 28h2v2H6z" fill="#f0c020"/>
</svg>
<svg style="left:410px;top:374px" width="32" height="32" viewBox="0 0 32 32">
 <defs><linearGradient id="exg" x1="0" y1="0" x2="0" y2="1"><stop offset="0" stop-color="#1a6ab8"/><stop offset="1" stop-color="#3ab8e8"/></linearGradient></defs>
 <circle cx="3.5" cy="4" r="2.4" fill="#3a70b0"/><circle cx="9.5" cy="4" r="2.4" fill="#5a88c0"/>
 <rect x="13.5" y="2" width="17.5" height="4" fill="#fff" stroke="#888" stroke-width=".7"/>
 <rect x="0" y="7" width="32" height="6.5" fill="#1e5aa0"/>
 <rect x="2" y="9" width="12" height="1.5" fill="#bcd4f0"/><rect x="18" y="9" width="10" height="1.5" fill="#bcd4f0"/>
 <rect x="0" y="13.5" width="22" height="18" fill="url(#exg)"/>
 <rect x="2" y="15" width="14" height="1.5" fill="#cfe8ff"/><rect x="2" y="18" width="11" height="1.5" fill="#cfe8ff"/>
</svg>
<svg style="left:410px;top:418px" width="32" height="32" viewBox="0 0 32 32">
 <rect x="2.5" y="0.5" width="29" height="22" fill="#fff" stroke="#333"/>
 <rect x="3" y="1" width="28" height="4" fill="#555"/>
 <rect x="0.5" y="9.5" width="29" height="22" fill="#fff" stroke="#222"/>
 <rect x="1" y="10" width="28" height="4" fill="#555"/>
 <rect x="23" y="11" width="5" height="2" fill="#d04040"/>
</svg>
<svg style="left:410px;top:462px" width="32" height="31" viewBox="0 0 32 31">
 <defs>
  <radialGradient id="bg1" cx=".4" cy=".35" r=".65"><stop offset="0" stop-color="#c8f0a0"/><stop offset=".5" stop-color="#5ab030"/><stop offset="1" stop-color="#2a6a10"/></radialGradient>
  <radialGradient id="bg2" cx=".4" cy=".35" r=".65"><stop offset="0" stop-color="#a8c8ff"/><stop offset=".5" stop-color="#3060d8"/><stop offset="1" stop-color="#10309a"/></radialGradient>
  <radialGradient id="bg3" cx=".4" cy=".35" r=".65"><stop offset="0" stop-color="#ffb0b0"/><stop offset=".5" stop-color="#e02020"/><stop offset="1" stop-color="#8a0808"/></radialGradient>
 </defs>
 <circle cx="8" cy="8" r="7.6" fill="url(#bg1)"/><circle cx="24" cy="8" r="7.6" fill="url(#bg2)"/><circle cx="16" cy="23" r="7.6" fill="url(#bg3)"/>
</svg>
<svg style="left:410px;top:505px" width="32" height="32" viewBox="0 0 32 32">
 <defs><linearGradient id="fb" x1="0" y1="0" x2="0" y2="1"><stop offset="0" stop-color="#4a7ae0"/><stop offset="1" stop-color="#0a2a90"/></linearGradient>
 <linearGradient id="fa" x1="0" y1="0" x2="0" y2="1"><stop offset="0" stop-color="#f04040"/><stop offset="1" stop-color="#a00808"/></linearGradient></defs>
 <text x="13.5" y="21.5" font-family="Liberation Serif" font-weight="bold" font-size="27" fill="url(#fb)">B</text>
 <text x="1" y="31" font-family="Liberation Serif" font-weight="bold" font-size="27" fill="url(#fa)">A</text>
</svg>
<svg style="left:413px;top:550px" width="28" height="32" viewBox="0 0 28 32">
 <defs><linearGradient id="sky" x1="0" y1="0" x2="1" y2="1"><stop offset="0" stop-color="#2a68c0"/><stop offset=".5" stop-color="#9ac4ec"/><stop offset="1" stop-color="#d8e8f4"/></linearGradient></defs>
 <path d="M2 1.5 L26.5 4 L26.5 24.5 L2 20.5 Z" fill="#e8e8ea" stroke="#a8a8ac" stroke-width=".8"/>
 <path d="M3 2.8 L24.8 5 L24.8 22.5 L3 19.2 Z" fill="url(#sky)"/>
 <path d="M3 13 L6 11 L9 12 L10 6 L12.5 7 L14 13 L18 12 L21 14 L24.8 13 L24.8 22.5 L3 19.2Z" fill="#2a3a2a"/>
 <path d="M3 16 L10 15 L16 17 L24.8 17.5 L24.8 22.5 L3 19.2Z" fill="#4a7a3a"/>
 <path d="M15 9 L18 8.5 L18.5 15 L15 15Z" fill="#8a9088"/>
 <path d="M12 22 L16 23 L16.5 26 L12 25.5Z" fill="#c8c8cc"/>
 <ellipse cx="13" cy="28" rx="8.5" ry="2.8" fill="#d8d8dc" stroke="#a0a0a4" stroke-width=".7"/>
</svg>
<svg style="left:411px;top:594px" width="30" height="31" viewBox="0 0 30 31">
 <circle cx="11" cy="11" r="9.5" fill="#eef3f8" stroke="#8a9098" stroke-width="1.6"/>
 <path d="M7 6 A6 6 0 0 1 14 4.5" stroke="#fff" stroke-width="1.5" fill="none"/>
 <path d="M18 18L27.5 28" stroke="#111" stroke-width="3" stroke-linecap="round"/>
</svg>

<!--LOGO-->
<svg style="left:266px;top:194px" width="180" height="34" viewBox="0 0 180 34">
 <defs>
  <linearGradient id="lr" x1="0" y1="0" x2="0" y2="1"><stop offset="0" stop-color="#f05050"/><stop offset="1" stop-color="#a00c0c"/></linearGradient>
  <linearGradient id="ly" x1="0" y1="0" x2="0" y2="1"><stop offset="0" stop-color="#ffe060"/><stop offset="1" stop-color="#d09000"/></linearGradient>
  <linearGradient id="lg" x1="0" y1="0" x2="0" y2="1"><stop offset="0" stop-color="#40b060"/><stop offset="1" stop-color="#0a6020"/></linearGradient>
  <linearGradient id="lb" x1="0" y1="0" x2="0" y2="1"><stop offset="0" stop-color="#50b0f0"/><stop offset="1" stop-color="#1050a0"/></linearGradient>
  <linearGradient id="lbr" x1="0" y1="0" x2="0" y2="1"><stop offset="0" stop-color="#80d0ff"/><stop offset="1" stop-color="#1a60c0"/></linearGradient>
 </defs>
 <g font-family="Liberation Sans" font-weight="bold" font-size="16.5" stroke-width=".9" stroke-linejoin="round">
  <g id="lt">
  <text transform="translate(4,19) scale(1.12,1)" fill="url(#lr)" stroke="#600">S</text>
  <text transform="translate(22,19) scale(1.12,1)" fill="url(#ly)" stroke="#806000">K</text>
  <text transform="translate(40,19) scale(1.12,1)" fill="url(#lg)" stroke="#063">I</text>
  <text transform="translate(47.5,19) scale(1.12,1)" fill="url(#lb)" stroke="#035">N</text>
  <text transform="translate(65,19) scale(1.12,1)" fill="#fff" stroke="#333">S</text>
  <text transform="translate(83,19) scale(1.12,1)" fill="#fff" stroke="#333">T</text>
  <text transform="translate(99,19) scale(1.12,1)" fill="#fff" stroke="#333">U</text>
  <text transform="translate(116,19) scale(1.12,1)" fill="#fff" stroke="#333">D</text>
  <text transform="translate(133,19) scale(1.12,1)" fill="#fff" stroke="#333">I</text>
  <text transform="translate(140.5,19) scale(1.12,1)" fill="#fff" stroke="#333">O</text>
  </g>
  <use href="#lt" transform="translate(0,33.5) scale(1,-.75)" opacity=".09"/>
 </g>
 <path d="M159 15 C157 12 157.5 8 158.5 5.5 L160.5 9 L161.5 4 L163.5 8 L165.5 4.5 L166.5 8.5 L169 5 L169.5 9.5 L172 7 C172.5 12 170.5 15.5 167 17 Z" fill="url(#lbr)" stroke="#0a3a80" stroke-width=".6"/>
 <path d="M159.5 16 L167 17.5 L165 21.5 L159 21 Z" fill="#fff" stroke="#222" stroke-width="1"/>
 <path d="M160 20.5 L153 26.5 C151.5 28 152.5 30 154.5 29 L163 22" fill="#fff" stroke="#222" stroke-width="1.1"/>
</svg>

<!--MAIN-->
<div class="a" style="left:465px;top:197.6px;font-size:17px;color:#1e1e1e">Controls</div>
<div class="a" style="left:465px;top:223.3px;font-size:11.7px;line-height:15px;white-space:normal;width:785px;color:#111">Controls are a basic part of any user interface.&nbsp; They include push buttons, sliders, scrollbars, and most of the other basic elements that users interact with.</div>
<div class="a" style="left:1681.5px;top:195.5px;font-size:13px;font-weight:bold;color:#111">x</div>

<!-- toolbar -->
<div style="position:absolute;left:516px;top:284px;width:1110px;height:35px;background:linear-gradient(#f8fafd 0,#f0f7fd 20%,#e2f3fb 39%,#e6fafd 41%,#cbdfec 43%,#d2e8f8 50%,#d2e8f6 92%,#e4fafc 96%)"></div>
<div style="position:absolute;left:525px;top:292px;width:1px;height:20px;background:repeating-linear-gradient(#8aa0b8 0 1px,transparent 1px 3px)"></div>
<div class="a" style="left:540px;top:297px;font-size:10.2px;color:#111">Normal</div>
<div class="a" style="left:596px;top:297px;font-size:10.2px;color:#111">Split Drop</div>
<svg style="left:656px;top:300px" width="7" height="4"><path d="M0 0h7l-3.5 4z" fill="#111"/></svg>
<div style="position:absolute;left:672px;top:290px;width:1px;height:23px;background:#9ab4cc"></div>
<div style="position:absolute;left:673px;top:290px;width:1px;height:23px;background:#fff"></div>
<div class="a" style="left:684.5px;top:297px;font-size:10.2px;color:#111">Drop down</div>
<div style="position:absolute;left:1371px;top:289px;width:250px;height:24.5px;background:#fff;border:1px solid #7a7a7a;border-radius:3px"></div>
<div class="a" style="left:1377.5px;top:297px;font-size:10.5px;color:#111">Normal combo box</div>
<svg style="left:1608px;top:298.5px" width="9" height="5"><path d="M0 0h9l-4.5 5z" fill="#111"/></svg>
<div style="position:absolute;left:516px;top:318.5px;width:1110px;height:2px;background:#111"></div>

<!-- listview -->
<div style="position:absolute;left:516px;top:319px;width:2px;height:181px;background:#111"></div>
<div style="position:absolute;left:518px;top:320px;width:1089px;height:21px;background:linear-gradient(#fff,#f6f6f6 50%,#ececec);border-bottom:1px solid #777;border-right:1px solid #888"></div>
<div style="position:absolute;left:518px;top:320px;width:120px;height:21px;background:linear-gradient(#f2f9fe,#e2f2fc 45%,#bde2f8 55%,#a8d6f6);border:1px solid #1a3460;border-top:none;border-right:none"></div>
<div style="position:absolute;left:618px;top:320px;width:1px;height:20px;background:#1e3a6a"></div>
<svg style="left:627px;top:332px" width="7" height="4.5"><path d="M0 0h7l-3.5 4.5z" fill="#2a3a44"/></svg>
<div style="position:absolute;left:638px;top:321px;width:1px;height:19px;background:#b8c4cc"></div>
<div style="position:absolute;left:706px;top:321px;width:2px;height:19px;background:linear-gradient(90deg,#d0d0d0,#fff)"></div>
<div style="position:absolute;left:766px;top:321px;width:2px;height:19px;background:linear-gradient(90deg,#d0d0d0,#fff)"></div>
<div class="a" style="left:525px;top:327px;font-size:10.2px;color:#111">Filename</div>
<div class="a" style="left:645px;top:327px;font-size:10.2px;color:#111">Date taken</div>
<div class="a" style="left:714px;top:327px;font-size:10.2px;color:#111">Tags</div>

<!-- v scrollbar -->
<div style="position:absolute;left:1608px;top:321px;width:16px;height:159px;background:linear-gradient(90deg,#e4e4e4,#f0f0f0 30%,#f0f0f0 70%,#e0e0e0);border:1px solid #e8e8e8"></div>
<svg style="left:1610px;top:326px" width="10" height="6"><path d="M0.5 5L5 0.8L9.5 5" stroke="#222" stroke-width="1.4" fill="none"/></svg>
<div style="position:absolute;left:1608px;top:356px;width:16px;height:100px;background:linear-gradient(90deg,#f4f4f4,#e6e6e6 40%,#cfcfcf 60%,#c4c4c4);border:1px solid #555;border-radius:2px"></div>
<div style="position:absolute;left:1612px;top:402px;width:7px;height:7px;background:repeating-linear-gradient(#333 0 1px,#fff 1px 2px)"></div>
<svg style="left:1611px;top:468px" width="10" height="6"><path d="M0 0h10l-5 5z" fill="#333"/></svg>

<!-- tabs -->
<div style="position:absolute;left:882px;top:389.5px;width:358px;height:58.5px;background:#fff;border:1px solid #6a6a6a;box-shadow:1px 1px 1px rgba(0,0,0,.12)"></div>
<div style="position:absolute;left:884px;top:371px;width:60px;height:19px;background:linear-gradient(#f4f4f4,#e4e4e4 50%,#d6d6d6);border:1px solid #6a6a6a;border-bottom:none;border-radius:2px 2px 0 0"></div>
<div style="position:absolute;left:944px;top:371px;width:60px;height:19px;background:linear-gradient(#f4f4f4,#e4e4e4 50%,#d6d6d6);border:1px solid #6a6a6a;border-bottom:none;border-radius:2px 2px 0 0"></div>
<div style="position:absolute;left:1004px;top:369px;width:60px;height:21.5px;background:#fff;border:1px solid #7a7a7a;border-bottom:none;border-radius:2px 2px 0 0"></div>
<div style="position:absolute;left:1064px;top:371px;width:80px;height:19px;background:linear-gradient(#eaf6fd,#c8e8fa 50%,#a8d8f6);border:1px solid #1e3a6a;border-bottom:none;border-radius:2px 2px 0 0"></div>
<div style="position:absolute;left:1144px;top:371px;width:60px;height:19px;background:linear-gradient(#f4f4f4,#e4e4e4 50%,#d6d6d6);border:1px solid #6a6a6a;border-bottom:none;border-radius:2px 2px 0 0"></div>
<div class="a" style="left:884px;width:60px;text-align:center;top:376px;font-size:11px;color:#111">Left</div>
<div class="a" style="left:944px;width:60px;text-align:center;top:376px;font-size:11px;color:#111">Middle</div>
<div class="a" style="left:1004px;width:60px;text-align:center;top:376px;font-size:11px;color:#111">State</div>
<div class="a" style="left:1064px;width:80px;text-align:center;top:376px;font-size:11px;color:#0a1a3a">Mouseover</div>
<div class="a" style="left:1144px;width:60px;text-align:center;top:376px;font-size:11px;color:#111">Right</div>
<div style="position:absolute;left:1003.5px;top:405.5px;width:117px;height:27px;background:linear-gradient(#f2f2f2,#e8e8e8 45%,#dadada 55%,#d2d2d2);border:1px solid #6a6a6a;border-radius:3px"></div>
<div class="a" style="left:1004px;width:116px;text-align:center;top:413.5px;font-size:11px;letter-spacing:-.3px;color:#111">Button</div>

<!-- progress -->
<div style="position:absolute;left:962px;top:460px;width:200px;height:15px;background:linear-gradient(#f0f0f0,#e8e8e8 50%,#d8d8d8);border:1px solid #5a5a5a"></div>
<div style="position:absolute;left:963.5px;top:461.5px;width:97px;height:12px;background:linear-gradient(#a8d8a8,#78c078 40%,#00c81e 45%,#00c020)"></div>

<!-- h scrollbar -->
<div style="position:absolute;left:518px;top:482px;width:1088px;height:16px;background:linear-gradient(#e6e6e6,#f0f0f0 30%,#f0f0f0 70%,#e4e4e4)"></div>
<svg style="left:524px;top:486.5px" width="5" height="8"><path d="M4.5 0.5L1 3.7L4.5 7" stroke="#222" stroke-width="1.2" fill="none"/></svg>
<div style="position:absolute;left:553.5px;top:482px;width:1028.5px;height:16px;background:linear-gradient(#f6f6f6,#e8e8e8 40%,#d2d2d2 60%,#c6c6c6);border:1px solid #555;border-radius:2px"></div>
<div style="position:absolute;left:1063px;top:486px;width:7px;height:7px;background:repeating-linear-gradient(90deg,#333 0 1px,#fff 1px 2px)"></div>
<svg style="left:1595px;top:485px" width="6" height="10"><path d="M0 0L5 5L0 10z" fill="#333"/></svg>

<!-- statusbar -->
<div style="position:absolute;left:516px;top:500px;width:1110px;height:20px;background:#efefef"></div>
<div class="a" style="left:523px;top:505px;font-size:10.5px;color:#111">Statusbar control</div>

<!--LIST-->
<div style="position:absolute;left:254px;top:541px;width:1446px;height:399px;overflow:hidden">
<div style="position:absolute;left:209px;top:24px;width:1211px;height:64.5px;background:#414850;border:1px solid #111416"></div>
<div class="a" style="left:219.8px;top:34.1px;font-size:15px;color:#f2f2f2">Edit Button controls</div>
<div class="a" style="left:219.5px;top:59.9px;font-size:13.9px;color:#ececec">Buttons come in a number of different forms.&nbsp; Standard OK/Cancel style, checkboxes, radio buttons and group boxes.</div>
<div class="a" style="left:219.8px;top:99.1px;font-size:15px;color:#2a2a2a">Edit Combobox controls</div>
<div class="a" style="left:219.5px;top:124.9px;font-size:13.9px;color:#151515">A Combobox is a drop down box from which you can select predetermined values.&nbsp; Some controls also allow you to enter your own values.</div>
<div class="a" style="left:219.8px;top:164.1px;font-size:15px;color:#2a2a2a">Edit Headerbar controls</div>
<div class="a" style="left:219.5px;top:189.9px;font-size:13.9px;color:#151515">Headerbar controls appear at the top of lists.&nbsp; The width of the columns can usually be adjusted by the user.</div>
<div class="a" style="left:219.8px;top:229.1px;font-size:15px;color:#2a2a2a">Edit Menus and menubars</div>
<div class="a" style="left:219.5px;top:254.9px;font-size:13.9px;color:#151515">Most applications use menus.&nbsp; They usually show up as drop downs from the menubar or as right click context menus.</div>
<div class="a" style="left:219.8px;top:294.1px;font-size:15px;color:#2a2a2a">Edit Progress bar controls</div>
<div class="a" style="left:219.5px;top:319.9px;font-size:13.9px;color:#151515">Progress bar controls are usually horizontal bars which update to indicate progress in a specific task.</div>
<div class="a" style="left:219.8px;top:359.1px;font-size:15px;color:#2a2a2a">Edit Scrollbars</div>
<div class="a" style="left:219.5px;top:384.9px;font-size:13.9px;color:#151515">Scrollbars appear on the right and the bottom of windows.&nbsp; They consist of arrow buttons, scrolling bars and a background area.</div>
</div>
<!-- list scrollbar -->
<div style="position:absolute;left:1684px;top:565.5px;width:16px;height:375px;background:repeating-conic-gradient(#fff 0 25%,#e6e6e6 0 50%) 0 0/2px 2px"></div>
<div style="position:absolute;left:1684px;top:565.5px;width:16px;height:16px;background:#efefef;border:1px solid #fff;border-right-color:#a0a0a0;border-bottom-color:#a0a0a0;box-shadow:inset 0 0 0 1px #e0e0e0"></div>
<svg style="left:1688.5px;top:571px" width="8" height="5"><path d="M0 4.5h8L4 0z" fill="#000"/></svg>
<div style="position:absolute;left:1684px;top:581px;width:16px;height:144px;background:#eee;border-top:1.5px solid #111;border-bottom:1.5px solid #111;border-left:1px solid #d8d8d8;border-right:1px solid #5a5a5a"></div>
<div style="position:absolute;left:1684px;top:924px;width:16px;height:16px;background:#efefef;border:1px solid #fff;border-right-color:#a0a0a0;border-bottom-color:#505050"></div>
<svg style="left:1688.5px;top:930px" width="8" height="5"><path d="M0 0h8L4 4.5z" fill="#000"/></svg>

<!--DESKTOP-->
<svg style="left:24px;top:7px" width="40" height="47" viewBox="0 0 40 47">
 <defs><linearGradient id="rbg" x1="0" y1="0" x2="1" y2="1"><stop offset="0" stop-color="#f4f6fa"/><stop offset=".6" stop-color="#dfe6ee"/><stop offset="1" stop-color="#c8d0da"/></linearGradient></defs>
 <path d="M3 4 L8 1 L13 3 L18 0.5 L24 2.5 L30 1 L36 4 L37 8 L3 8Z" fill="#f2f4f8" stroke="#c8ccd4" stroke-width=".6"/>
 <path d="M2 7 H38 L35 45 H5 Z" fill="url(#rbg)" fill-opacity=".95" stroke="#b8c0cc" stroke-width=".8"/>
 <path d="M6 42 H34 L33.7 45 H6.3Z" fill="#b6c2b0"/>
 <g fill="#1a78d0">
  <path d="M16 14 L22 13 L26 16 L29 14 L28 22 L21 21 L24 19 L21 17 L18 20 Z"/>
  <path d="M10 24 L14 21 L18 25 L16 26 L20 33 L13 33 L10 28 Z"/>
  <path d="M22 35 L22 32 L28 32 L31 26 L34 28 L31 34 L28 35 L28 38 Z"/>
 </g>
</svg>
<div class="a" style="left:14px;top:60px;font-size:12px;letter-spacing:-.35px;color:#fff;text-shadow:0 0 2px #000,1px 1px 1px #000">Recycle Bin</div>
<!--TASKBAR-->
<div style="position:absolute;left:0;top:1032px;width:1920px;height:48px;background:#1b3866;border-top:1px solid #254a80"></div>
<div style="position:absolute;left:1165px;top:1036px;width:40px;height:40px;border-radius:4px;background:rgba(255,255,255,.07);border:1px solid rgba(255,255,255,.08)"></div>
<svg style="left:0;top:1032px" width="1920" height="48" viewBox="0 1032 1920 48">
 <defs>
  <linearGradient id="wg" x1="0" y1="0" x2="1" y2="1"><stop offset="0" stop-color="#6ee6ff"/><stop offset="1" stop-color="#1a9ef0"/></linearGradient>
  <linearGradient id="edg" x1="0" y1="0" x2="1" y2="1"><stop offset="0" stop-color="#3ad0a0"/><stop offset=".5" stop-color="#2a90e0"/><stop offset="1" stop-color="#1050b0"/></linearGradient>
  <linearGradient id="mlg" x1="0" y1="0" x2="0" y2="1"><stop offset="0" stop-color="#2a8ae8"/><stop offset="1" stop-color="#48b8f8"/></linearGradient>
 </defs>
 <!-- start -->
 <rect x="689" y="1045" width="11" height="11" fill="url(#wg)"/><rect x="701.5" y="1045" width="11" height="11" fill="url(#wg)"/>
 <rect x="689" y="1057.5" width="11" height="11" fill="url(#wg)"/><rect x="701.5" y="1057.5" width="11" height="11" fill="url(#wg)"/>
 <!-- weather -->
 <path d="M734 1062 C733 1057 737 1054 741 1055 C743 1050 749 1049 752 1053 C756 1053 758 1057 757 1060 C757 1063 755 1064 752 1064 H738 C735 1064 734 1063 734 1062Z" fill="#d0dcf4" stroke="#a8b8dc" stroke-width=".6"/>
 <rect x="742.5" y="1041" width="20" height="12" rx="5" fill="#111a26"/>
 <text x="745" y="1051.5" font-family="Liberation Sans" font-size="10.5" fill="#fff">32°</text>
 <!-- explorer -->
 <path d="M777 1047 H786 L788 1049 H801 V1066 H777Z" fill="#f8d048"/>
 <path d="M777 1047 H786 L788 1049 H777Z" fill="#e0a820"/>
 <rect x="777" y="1051" width="24" height="15.5" fill="#ffd84a"/>
 <rect x="784" y="1059" width="11" height="7.5" fill="#1a7ad8"/>
 <!-- 1password -->
 <circle cx="833" cy="1055.5" r="11" fill="#fff"/><circle cx="833" cy="1055.5" r="8.5" fill="#1a5ad8"/><circle cx="833" cy="1055.5" r="6.3" fill="#fff"/>
 <rect x="831.6" y="1050.5" width="2.8" height="10" rx="1" fill="#111"/>
 <!-- spotify -->
 <circle cx="877" cy="1055.5" r="12" fill="#1ed760"/>
 <path d="M869.5 1051.5 Q877 1048.5 885 1052" stroke="#111" stroke-width="2.2" fill="none" stroke-linecap="round"/>
 <path d="M870.5 1055.5 Q877 1053 884 1056" stroke="#111" stroke-width="1.9" fill="none" stroke-linecap="round"/>
 <path d="M871.5 1059.3 Q877 1057.5 883 1059.8" stroke="#111" stroke-width="1.6" fill="none" stroke-linecap="round"/>
 <!-- twitter -->
 <path d="M911 1044 H931 Q933 1044 933 1046 V1064 Q933 1065.5 931 1065.5 H923 L921 1068 L919 1065.5 H911 Q909 1065.5 909 1064 V1046 Q909 1044 911 1044Z" fill="#48a8e8"/>
 <path d="M914 1058 C918 1061 926 1060 927 1051 L929 1049.5 L927 1049.5 C926 1047 922 1047 921.5 1051 C918.5 1051 916.5 1049.5 915 1048 C914 1051 916 1053 917 1053 L915.5 1053 C916 1055 918 1056 919 1056 C917.5 1057.5 915.5 1058 914 1058Z" fill="#fff"/>
 <!-- camtasia/clipchamp-like -->
 <rect x="954" y="1045" width="22" height="21" rx="2" fill="#0c0e4a"/>
 <rect x="959" y="1049.5" width="12" height="11" fill="none" stroke="#8a7ae0" stroke-width="1" transform="rotate(22 965 1055)"/>
 <circle cx="966" cy="1055.5" r="2.6" fill="none" stroke="#d0c8ff" stroke-width="1.2"/>
 <path d="M965.3 1054.2v2.6l2-1.3z" fill="#d0c8ff"/>
 <!-- notion -->
 <path d="M998.5 1047.5 L1002 1045 H1018 L1020 1047 V1064 L1016.5 1066.5 H1001 L998.5 1064Z" fill="#fff" stroke="#111" stroke-width="1.3"/>
 <text x="1002.5" y="1063" font-family="Liberation Serif" font-weight="bold" font-size="15" fill="#111">N</text>
 <rect x="1005" y="1072" width="6" height="2.5" rx="1" fill="#b8c4d8"/>
 <!-- edge -->
 <defs><linearGradient id="edg2" x1="0" y1="0" x2="0" y2="1"><stop offset="0" stop-color="#3ad4e4"/><stop offset=".45" stop-color="#2a8ee8"/><stop offset="1" stop-color="#1648b8"/></linearGradient>
 <linearGradient id="edgg" x1="0" y1="0" x2="1" y2=".4"><stop offset="0" stop-color="#3ccce8"/><stop offset=".5" stop-color="#3cd6c0"/><stop offset="1" stop-color="#66e040"/></linearGradient></defs>
 <circle cx="1053" cy="1056" r="12" fill="url(#edg2)"/>
 <path d="M1041.5 1053 C1043 1047 1049 1044.5 1054 1045 C1060 1045.5 1065 1050 1065 1055 C1065 1059 1062 1061 1059 1060.5 C1056 1060 1055.5 1058 1056 1056 C1056 1052.5 1052.5 1050.5 1049 1051 C1046 1051.5 1043 1052.5 1041.5 1053Z" fill="url(#edgg)"/>
 <path d="M1041.5 1053 C1043 1047 1049 1044.5 1054 1045 C1050 1046 1046 1048.5 1041.5 1053Z" fill="#48e0f0" opacity=".7"/>
 <ellipse cx="1052.5" cy="1057.5" rx="3.3" ry="3.7" fill="#1a3a8a"/>
 <path d="M1048 1058 C1048 1063 1052 1066 1057 1066.5 C1052 1067 1045 1064 1044 1058Z" fill="#2a68d8" opacity=".8"/>
 <!-- mail -->
 <path d="M1085 1051 L1097 1044 L1109 1051Z" fill="#1a6ad0"/>
 <rect x="1085" y="1051" width="24" height="15.5" fill="#3aaaf4"/>
 <path d="M1086 1052 H1108 L1097 1059Z" fill="#f6f2ea"/>
 <path d="M1085 1052 L1097 1059 L1109 1052" fill="none" stroke="#1e70c8" stroke-width=".8"/>
 <path d="M1085 1053 L1109 1066.5 H1085Z" fill="#2a9cf0"/>
 <path d="M1109 1053 L1109 1066.5 L1097 1060Z" fill="#48c0f8"/>
 <!-- arrow app -->
 <rect x="1129" y="1044" width="23" height="24" rx="3" fill="#0e4aa0"/>
 <path d="M1135 1066 V1052 H1133 L1137 1047 L1141 1052 H1139 V1066Z" fill="#36a8f8"/>
 <path d="M1142 1066 V1051 H1139.5 L1144 1045 L1148.5 1051 H1146 V1066Z" fill="#fff"/>
 <rect x="1137" y="1072" width="7" height="2.5" rx="1" fill="#b8c4d8"/>
 <!-- skinstudio -->
 <rect x="1174.5" y="1046" width="21" height="20" fill="#fff" stroke="#444" stroke-width=".8"/>
 <rect x="1175" y="1046.5" width="20" height="4.5" fill="#e02020"/>
 <path d="M1177 1060 l2.5 2.5 l4-5" stroke="#111" stroke-width="1.8" fill="none"/>
 <path d="M1186 1060 l2.5 2.5 l4.5-6" stroke="#111" stroke-width="1.8" fill="none"/>
 <path d="M1177 1063 L1196 1044.5" stroke="#f0d030" stroke-width="2.2"/>
 <path d="M1177 1063 L1196 1044.5" stroke="#9a6a10" stroke-width=".5"/>
 <rect x="1179" y="1073" width="12" height="2.5" rx="1" fill="#8a98b0"/>
 <!-- settings -->
 <g transform="translate(1229,1056)">
  <path d="M-2.5 -12 H2.5 L3.2 -8.6 L6.4 -7 L9.6 -8.8 L12 -4.8 L9.3 -2.5 V2.5 L12 4.8 L9.6 8.8 L6.4 7 L3.2 8.6 L2.5 12 H-2.5 L-3.2 8.6 L-6.4 7 L-9.6 8.8 L-12 4.8 L-9.3 2.5 V-2.5 L-12 -4.8 L-9.6 -8.8 L-6.4 -7 L-3.2 -8.6Z" fill="#8a8e96"/>
  <circle r="7" fill="#fff"/><circle r="4.6" fill="#1a5ac8"/>
 </g>
 <rect x="1226" y="1072" width="6" height="2.5" rx="1" fill="#b8c4d8"/>
 <!-- tray -->
 <path d="M1640.5 1058.5 L1645.5 1053.5 L1650.5 1058.5" stroke="#fff" stroke-width="1.4" fill="none"/>
 <path d="M1670 1059 C1669 1056 1671 1054 1674 1054.5 C1675 1051 1680 1050.5 1682 1053.5 C1685 1053.5 1686 1056 1685.5 1058.5 C1685 1060.5 1683.5 1061 1682 1061 H1672 C1670.5 1061 1670 1060 1670 1059Z" fill="#e8e8ec"/>
 <path d="M1674 1054.5 C1675 1051 1680 1050.5 1682 1053.5 C1679 1054 1677 1055.5 1676 1057 C1675 1056 1674.5 1055.5 1674 1054.5Z" fill="#a0a4ac"/>
 <path d="M1702 1059 C1701 1056 1703 1054 1706 1054.5 C1707 1051 1712 1050.5 1714 1053.5 C1717 1053.5 1718 1056 1717.5 1058.5 C1717 1060.5 1715.5 1061 1714 1061 H1704 C1702.5 1061 1702 1060 1702 1059Z" fill="#3a96e8"/>
 <path d="M1741.5 1048 L1749 1051 V1057 C1749 1061 1745 1063.5 1741.5 1064.5 C1738 1063.5 1734 1061 1734 1057 V1051Z" fill="#38a8e8"/>
 <path d="M1741.5 1048 V1064.5 C1738 1063.5 1734 1061 1734 1057 V1051Z" fill="#2a7ac8"/>
 <path d="M1745 1055 L1750 1064 H1740Z" fill="#f8e020" stroke="#1b3866" stroke-width=".6"/>
 <rect x="1744.5" y="1058" width="1" height="3" fill="#111"/><rect x="1744.5" y="1062" width="1" height="1" fill="#111"/>
 <rect x="1765.5" y="1048.5" width="11" height="10" fill="none" stroke="#fff" stroke-width="1.3"/>
 <path d="M1768 1063 H1775 M1771 1058.5 V1063" stroke="#fff" stroke-width="1.3"/>
 <rect x="1776.5" y="1047.5" width="4" height="5" fill="#1b3866" stroke="#fff" stroke-width="1.1"/>
 <path d="M1778.5 1052.5 V1064" stroke="#fff" stroke-width="1.2"/>
 <path d="M1789.5 1053 H1792.5 L1796.5 1050 V1062 L1792.5 1059 H1789.5Z" fill="none" stroke="#fff" stroke-width="1.2"/>
 <path d="M1798.5 1053.5 Q1800 1056 1798.5 1058.5" stroke="#fff" stroke-width="1.1" fill="none"/>
 <path d="M1801.5 1051 Q1804.5 1056 1801.5 1061" stroke="#8aa0c8" stroke-width="1" fill="none"/>
 <path d="M1886 1061 C1888 1059 1888 1057 1888 1055 C1888 1051.5 1890 1049.5 1892 1049.5 C1894 1049.5 1896 1051.5 1896 1055 C1896 1057 1896 1059 1898 1061Z" fill="#fff"/>
 <rect x="1890" y="1062" width="4" height="2" rx="1" fill="#fff"/>
 <text x="1889" y="1058.5" font-family="Liberation Sans" font-weight="bold" font-size="6" fill="#1b3866">z</text>
 <text x="1895" y="1052" font-family="Liberation Sans" font-weight="bold" font-size="6" fill="#fff">z</text>
</svg>
<div class="a" style="right:44px;top:1042px;font-size:12px;color:#fff">10:20 AM</div>
<div class="a" style="right:43.5px;top:1058px;font-size:12px;color:#fff">3/13/2023</div>
</div>
</body></html>
